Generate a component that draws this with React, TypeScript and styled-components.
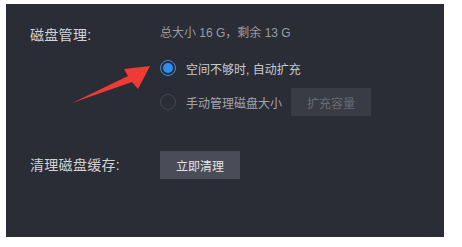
import styled, { createGlobalStyle } from "styled-components";

const GlobalStyle = createGlobalStyle`
  html, body {
    margin: 0;
    padding: 0;
    background: #ffffff;
  }
  body {
    font-family: "Liberation Sans", "Noto Sans CJK SC", sans-serif;
  }
`;

const Page = styled.div`
  width: 462px;
  height: 247px;
  padding: 4px 18px 10px 6px;
  box-sizing: border-box;
`;

const Panel = styled.div`
  position: relative;
  height: 233px;
  background: #2a2d35;
  padding: 21px 24px 0;
  box-sizing: border-box;
  display: flex;
  flex-direction: column;
  gap: 35px;
`;

const Section = styled.div`
  display: grid;
  grid-template-columns: 130px 1fr;
  align-items: start;
`;

const Label = styled.div<{ $top?: number }>`
  font-size: 14px;
  line-height: 18px;
  color: #d2d3d6;
  letter-spacing: 0.3px;
  padding-top: ${(p) => p.$top ?? 0}px;
`;

const Options = styled.div`
  display: flex;
  flex-direction: column;
`;

const Info = styled.div`
  font-size: 12px;
  line-height: 16px;
  color: #9a9ca2;
  margin-bottom: 17px;
`;

const OptionRow = styled.div<{ $h: number; $mt?: number }>`
  display: flex;
  align-items: center;
  height: ${(p) => p.$h}px;
  margin-top: ${(p) => p.$mt ?? 0}px;
`;

const Radio = styled.span<{ $on?: boolean }>`
  width: 16px;
  height: 16px;
  border-radius: 50%;
  box-sizing: border-box;
  margin-right: 10px;
  border: 1.5px solid ${(p) => (p.$on ? "#3c8fe8" : "#464951")};
  display: flex;
  align-items: center;
  justify-content: center;
  &::after {
    content: "";
    width: 10px;
    height: 10px;
    border-radius: 50%;
    background: ${(p) => (p.$on ? "#2f8ff0" : "transparent")};
  }
`;

const OptionText = styled.span<{ $dim?: boolean }>`
  font-size: 12px;
  color: ${(p) => (p.$dim ? "#a3a5aa" : "#c9cace")};
`;

const Button = styled.button<{ $disabled?: boolean }>`
  height: 28px;
  width: 80px;
  border: none;
  padding: 0;
  font-family: inherit;
  font-size: 12px;
  background: ${(p) => (p.$disabled ? "#393c45" : "#4a4c57")};
  color: ${(p) => (p.$disabled ? "#686b73" : "#e2e3e6")};
  margin-left: ${(p) => (p.$disabled ? "9px" : "0")};
`;

const Arrow = styled.svg`
  position: absolute;
  left: 0;
  top: 0;
  pointer-events: none;
`;

export default function App() {
  return (
    <Page>
      <GlobalStyle />
      <Panel>
        <Section>
          <Label $top={1}>磁盘管理:</Label>
          <Options>
            <Info>总大小 16 G，剩余 13 G</Info>
            <OptionRow $h={20}>
              <Radio $on />
              <OptionText>空间不够时, 自动扩充</OptionText>
            </OptionRow>
            <OptionRow $h={28} $mt={10}>
              <Radio />
              <OptionText $dim>手动管理磁盘大小</OptionText>
              <Button $disabled>扩充容量</Button>
            </OptionRow>
          </Options>
        </Section>
        <Section>
          <Label $top={5}>清理磁盘缓存:</Label>
          <div>
            <Button>立即清理</Button>
          </div>
        </Section>
        <Arrow width="438" height="233" viewBox="6 4 438 233">
          <polygon
            points="72,103 128,76 124,69 150,66 138,89 132,82"
            fill="#f03a36"
          />
        </Arrow>
      </Panel>
    </Page>
  );
}
